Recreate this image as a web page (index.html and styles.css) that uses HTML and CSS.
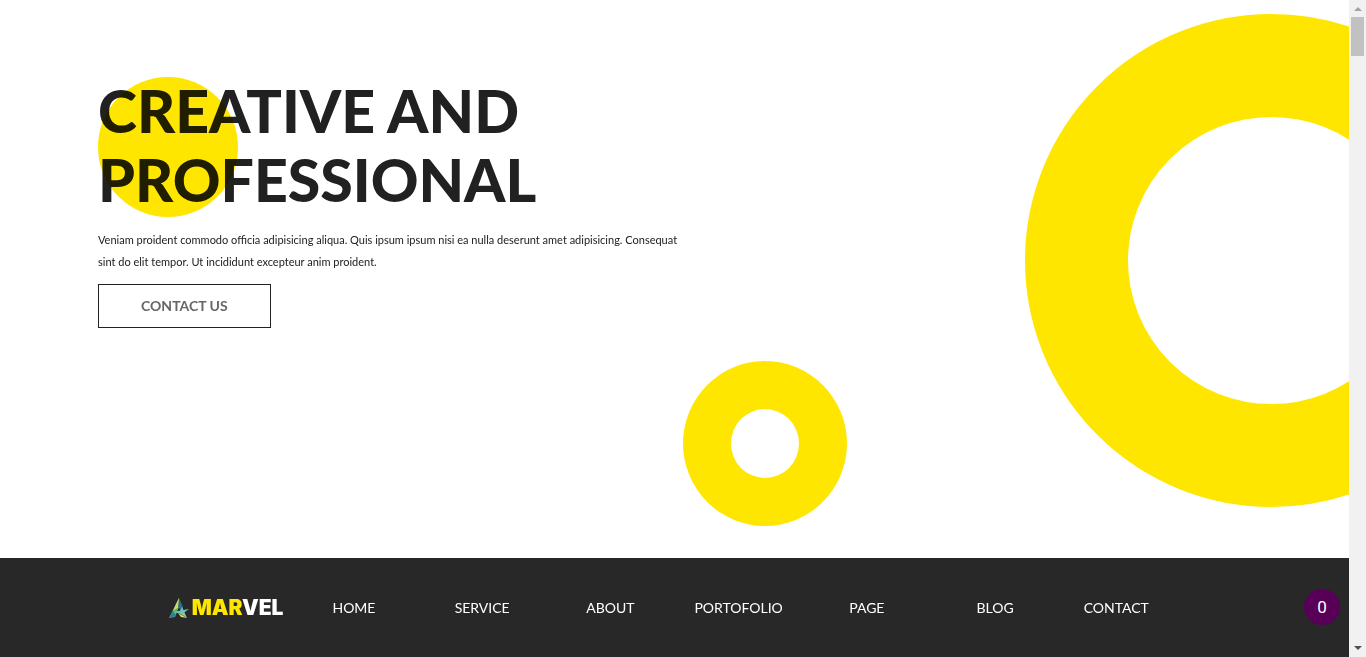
FILE: index.html
```html
<!DOCTYPE html>
<html lang="en">
<head>
<meta charset="utf-8">
<meta name="viewport" content="width=device-width, initial-scale=1">
<title>Marvel</title>
<link rel="stylesheet" href="styles.css">
</head>
<body>
<div class="page">
  <header class="hero">
    <div class="ring ring-large"></div>
    <div class="ring ring-small"></div>
    <div class="dot"></div>
    <h1 class="title">CREATIVE AND<br>PROFESSIONAL</h1>
    <p class="lead">Veniam proident commodo officia adipisicing aliqua. Quis ipsum ipsum nisi ea nulla deserunt amet adipisicing. Consequat sint do elit tempor. Ut incididunt excepteur anim proident.</p>
    <a class="button" href="#contact">CONTACT US</a>
  </header>
  <nav class="bar">
    <div class="menu">
      <a class="logo" href="#home">
        <svg class="mark" viewBox="0 0 20 21" aria-hidden="true">
          <path fill="#4fae72" d="M10 1 0 21 6 20 10 10z"/>
          <path fill="#d3d85a" d="M10 1 7 7 4 14 10 10z"/>
          <path fill="#2b7189" d="M10 1 9 10 13 14 14 10z"/>
          <path fill="#8fc2a0" d="M13 10 18 21 10 16z"/>
          <path fill="#6bc5bb" d="M4 15 20 12 13 17z"/>
          <path fill="#e5dc64" d="M9 16 18 21 12 20z"/>
          <path fill="#357c96" d="M0 21 4 14 7 19z"/>
        </svg>
        <span class="word"><span class="word-accent">MAR</span>VEL</span>
      </a>
      <a class="link" href="#home">HOME</a>
      <a class="link" href="#service">SERVICE</a>
      <a class="link" href="#about">ABOUT</a>
      <a class="link" href="#portofolio">PORTOFOLIO</a>
      <a class="link" href="#page">PAGE</a>
      <a class="link" href="#blog">BLOG</a>
      <a class="link" href="#contact">CONTACT</a>
    </div>
    <button class="counter" type="button">0</button>
  </nav>
</div>
<div class="scroll" aria-hidden="true">
  <svg class="arrow arrow-up" viewBox="0 0 17 17"><path d="M5 11h8L9 7z"/></svg>
  <div class="thumb"></div>
  <svg class="arrow arrow-down" viewBox="0 0 17 17"><path d="M5 6h8l-4 4z"/></svg>
</div>
</body>
</html>
```
FILE: styles.css
```css
* {
  box-sizing: border-box;
}

body {
  display: flex;
  min-height: 100vh;
  margin: 0;
  background: #fff;
  color: #212121;
  font-family: Lato, "Liberation Sans", sans-serif;
}

.page {
  display: flex;
  flex: 1;
  flex-direction: column;
  min-width: 0;
}

.hero {
  position: relative;
  flex: 1;
  padding: 76px 98px 0;
  overflow: hidden;
  background: #fff;
}

.ring,
.dot {
  position: absolute;
  border-radius: 50%;
}

.ring {
  border: solid #ffe600;
}

.ring-large {
  top: 14px;
  right: -169px;
  width: 493px;
  height: 493px;
  border-width: 103px;
}

.ring-small {
  top: 361px;
  right: 502px;
  width: 164px;
  height: 165px;
  border-width: 48px;
}

.dot {
  top: 77px;
  left: 98px;
  width: 140px;
  height: 140px;
  background: #ffe600;
}

.title {
  position: relative;
  margin: 0;
  font-size: 59px;
  font-weight: 900;
  line-height: 69px;
  mix-blend-mode: multiply;
}

.lead {
  position: relative;
  max-width: 590px;
  margin: 15px 0 11px;
  font-size: 11px;
  font-weight: 400;
  line-height: 22px;
}

.button {
  position: relative;
  display: inline-block;
  padding: 0 42px;
  border: 1px solid #212121;
  color: #666;
  font-size: 14px;
  font-weight: 700;
  line-height: 42px;
  text-decoration: none;
}

.bar {
  position: relative;
  display: flex;
  align-items: center;
  justify-content: center;
  height: 99px;
  background: #282828;
}

.menu {
  display: grid;
  grid-template-columns: 121fr repeat(6, 128fr) 114fr;
  align-items: center;
  width: 75%;
  padding-right: 7px;
}

.logo {
  display: flex;
  align-items: center;
  gap: 3px;
  color: #fff;
  text-decoration: none;
}

.mark {
  flex: none;
  width: 20px;
  height: 21px;
}

.word {
  font-family: Inter, "Liberation Sans", sans-serif;
  font-size: 21px;
  font-weight: 900;
  line-height: 24px;
}

.word-accent {
  color: #ffe600;
}

.link {
  color: #fff;
  font-size: 14px;
  line-height: 24px;
  text-align: center;
  text-decoration: none;
}

.counter {
  position: absolute;
  top: 31px;
  right: 9px;
  width: 36px;
  height: 36px;
  padding: 0;
  border: 0;
  border-radius: 50%;
  background: #580058;
  color: #fff;
  font-family: Roboto, "Liberation Sans", sans-serif;
  font-size: 17px;
}

.scroll {
  display: flex;
  flex: none;
  flex-direction: column;
  width: 17px;
  background: #f1f1f1;
}

.arrow {
  width: 17px;
  height: 17px;
}

.arrow-up {
  fill: #a3a3a3;
}

.arrow-down {
  margin-top: auto;
  fill: #505050;
}

.thumb {
  height: 39px;
  margin: 0 2px;
  background: #c1c1c1;
}
```
